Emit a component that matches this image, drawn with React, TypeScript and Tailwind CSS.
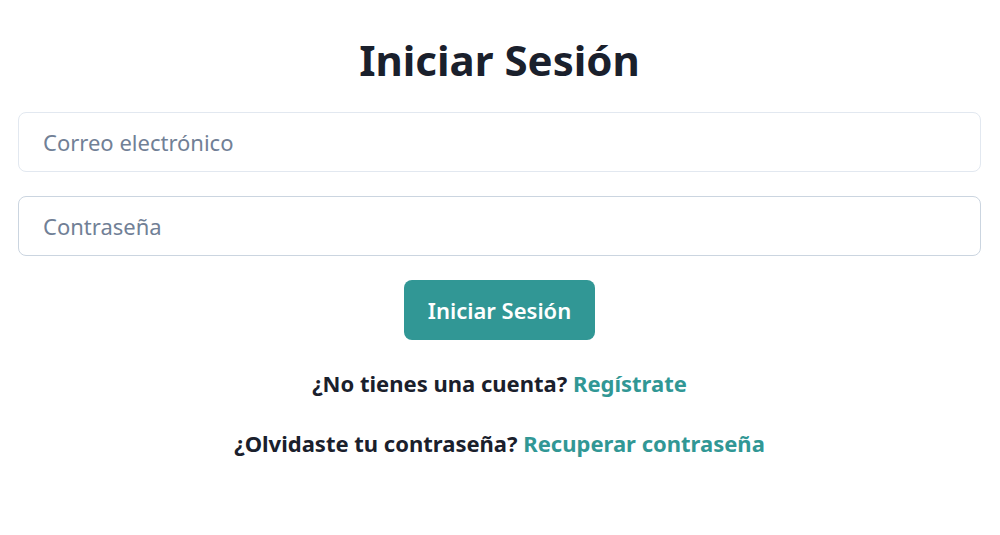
import React from 'react';

const App = () => {
  return (
    <div className="min-h-screen bg-white pl-[18px] pr-[19px] pt-[34px] font-['Noto_Sans',sans-serif] text-[#1a202c]">
      <h1 className="text-center text-[42px] font-bold leading-[52px]">Iniciar Sesión</h1>

      <form className="mt-[26px] flex flex-col">
        <input
          type="email"
          placeholder="Correo electrónico"
          className="h-[60px] w-full rounded-lg border border-[#e2e8f0] px-6 text-[22px] outline-none placeholder:text-[#718096]"
        />
        <input
          type="password"
          placeholder="Contraseña"
          className="mt-6 h-[60px] w-full rounded-lg border border-[#cbd5e0] px-6 text-[22px] outline-none placeholder:text-[#718096]"
        />
        <div className="mt-6 flex justify-center">
          <button
            type="button"
            className="h-[60px] rounded-lg bg-[#319795] px-6 text-[22px] font-semibold text-white"
          >
            Iniciar Sesión
          </button>
        </div>
      </form>

      <p className="mt-[28px] text-center text-[22px] font-bold leading-[30px]">
        ¿No tienes una cuenta? <a href="#" className="text-[#319795]">Regístrate</a>
      </p>
      <p className="mt-[30px] text-center text-[22px] font-bold leading-[30px]">
        ¿Olvidaste tu contraseña? <a href="#" className="text-[#319795]">Recuperar contraseña</a>
      </p>
    </div>
  );
};

export default App;
